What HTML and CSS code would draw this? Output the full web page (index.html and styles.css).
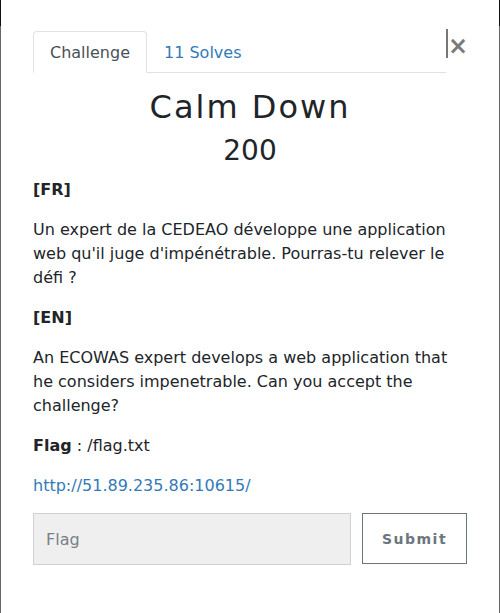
FILE: index.html
```html
<!DOCTYPE html>
<html lang="fr">
<head>
<meta charset="utf-8">
<title>Calm Down</title>
<link rel="stylesheet" href="styles.css">
</head>
<body>
<div class="frame">
  <div class="modal">
    <div class="header">
      <ul class="tabs">
        <li class="tab active">Challenge</li>
        <li class="tab"><a href="#">11 Solves</a></li>
      </ul>
      <button class="close" type="button" aria-label="Close">×</button>
    </div>
    <h2 class="title">Calm Down</h2>
    <h3 class="value">200</h3>
    <div class="desc">
      <p><strong>[FR]</strong></p>
      <p>Un expert de la CEDEAO développe une application web qu'il juge d'impénétrable. Pourras-tu relever le défi ?</p>
      <p><strong>[EN]</strong></p>
      <p>An ECOWAS expert develops a web application that he considers impenetrable. Can you accept the challenge?</p>
      <p><strong>Flag</strong> : /flag.txt</p>
      <p class="last"><a href="#">http://51.89.235.86:10615/</a></p>
    </div>
    <form class="submit-row">
      <input class="flag-input" type="text" placeholder="Flag">
      <button class="submit" type="button">Submit</button>
    </form>
  </div>
</div>
</body>
</html>
```

FILE: styles.css
```css
html, body {
  margin: 0;
  padding: 0;
}
body {
  font-family: "DejaVu Sans", sans-serif;
  color: #212529;
  font-size: 16px;
  line-height: 24px;
  background: #fff;
}
.frame {
  width: 500px;
  height: 613px;
  box-sizing: border-box;
  background:
    linear-gradient(#111 0 26px, #666 26px) left top / 1px 100% no-repeat,
    linear-gradient(#111 0 26px, #666 26px) right top / 1px 100% no-repeat,
    #fff;
  overflow: hidden;
}
.modal {
  padding: 29px 33px 0 33px;
}
.header {
  display: flex;
  align-items: flex-start;
}
.tabs {
  flex: 1;
  list-style: none;
  margin: 2px 0 0 0;
  padding: 0;
  display: flex;
  border-bottom: 1px solid #dee2e6;
}
.tab {
  padding: 9px 16px 7px 16px;
  border: 1px solid transparent;
  border-top-left-radius: 4px;
  border-top-right-radius: 4px;
  margin-bottom: -1px;
  font-size: 16px;
  line-height: 24px;
}
.tab.active {
  color: #495057;
  border-color: #dee2e6 #dee2e6 #fff;
  background: #fff;
}
.tab a {
  color: #337ab7;
  text-decoration: none;
}
.close {
  width: 21px;
  height: 29px;
  margin: 0;
  padding: 4px 0 0 0;
  border: 0;
  border-left: 2px solid #777;
  background: transparent;
  color: #7a7a7a;
  font-family: "DejaVu Sans", sans-serif;
  font-size: 24px;
  font-weight: 700;
  line-height: 24px;
  text-align: right;
  box-sizing: border-box;
}
.title {
  margin: 15px 0 8px;
  text-align: center;
  font-weight: 400;
  font-size: 32px;
  line-height: 38px;
  letter-spacing: 2px;
}
.value {
  margin: 0 0 10px;
  text-align: center;
  font-weight: 400;
  font-size: 28px;
  line-height: 34px;
}
.desc p {
  margin: 0 0 16px;
}
.desc p.last {
  margin-bottom: 15px;
}
.desc strong {
  font-weight: 700;
}
.desc a {
  color: #337ab7;
  text-decoration: none;
}
.submit-row {
  display: flex;
  gap: 11px;
  margin: 0;
}
.flag-input {
  flex: 1;
  min-width: 0;
  height: 52px;
  box-sizing: border-box;
  margin: 0;
  padding: 0 12px;
  border: 1px solid #ccd2d8;
  background: #efefef;
  font-family: "DejaVu Sans", sans-serif;
  font-size: 16px;
  color: #495057;
}
.flag-input::placeholder {
  color: #7a7f85;
}
.submit {
  width: 105px;
  height: 51px;
  box-sizing: border-box;
  margin: 0;
  padding: 0;
  border: 1px solid #6c757d;
  background: #fff;
  color: #6c757d;
  font-family: "DejaVu Sans", sans-serif;
  font-size: 14px;
  font-weight: 700;
  letter-spacing: 1.5px;
}
```
